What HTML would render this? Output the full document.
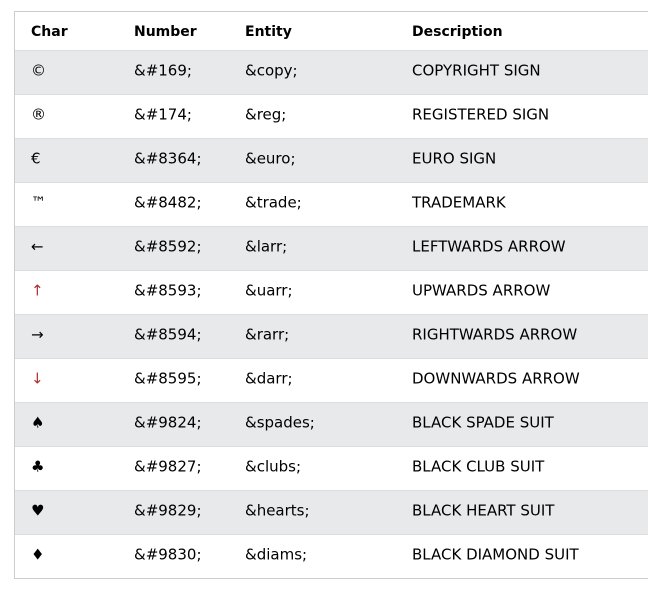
<!DOCTYPE html>
<html><head><style>
body{margin:0;background:#fff;font-family:"DejaVu Sans","Liberation Sans",sans-serif;font-size:15px;color:#000;}
.t{position:absolute;left:14px;top:11px;width:660px;border:1px solid #ccc;border-collapse:collapse;}
.r{position:relative;height:44px;border-top:1px solid #ddd;box-sizing:border-box;}
.h{height:38px;border-top:none;font-weight:bold;font-size:14px;}
.r.s{background:#e7e9eb;}
.r span{position:absolute;top:50%;transform:translateY(-64%);white-space:nowrap;}
.h span{transform:translateY(-45%);}
.a{left:16px;font-size:15px}.b{left:119px}.c{left:230px}.d{left:397px}
.h .a{font-size:14px}
</style></head><body>
<div class="t">
<div class="r h"><span class="a">Char</span><span class="b">Number</span><span class="c">Entity</span><span class="d">Description</span></div>
<div class="r s"><span class="a">©</span><span class="b">&amp;#169;</span><span class="c">&amp;copy;</span><span class="d">COPYRIGHT SIGN</span></div>
<div class="r"><span class="a">®</span><span class="b">&amp;#174;</span><span class="c">&amp;reg;</span><span class="d">REGISTERED SIGN</span></div>
<div class="r s"><span class="a">€</span><span class="b">&amp;#8364;</span><span class="c">&amp;euro;</span><span class="d">EURO SIGN</span></div>
<div class="r"><span class="a">™</span><span class="b">&amp;#8482;</span><span class="c">&amp;trade;</span><span class="d">TRADEMARK</span></div>
<div class="r s"><span class="a">←</span><span class="b">&amp;#8592;</span><span class="c">&amp;larr;</span><span class="d">LEFTWARDS ARROW</span></div>
<div class="r"><span class="a" style="color:#a33">↑</span><span class="b">&amp;#8593;</span><span class="c">&amp;uarr;</span><span class="d">UPWARDS ARROW</span></div>
<div class="r s"><span class="a">→</span><span class="b">&amp;#8594;</span><span class="c">&amp;rarr;</span><span class="d">RIGHTWARDS ARROW</span></div>
<div class="r"><span class="a" style="color:#a33">↓</span><span class="b">&amp;#8595;</span><span class="c">&amp;darr;</span><span class="d">DOWNWARDS ARROW</span></div>
<div class="r s"><span class="a">♠</span><span class="b">&amp;#9824;</span><span class="c">&amp;spades;</span><span class="d">BLACK SPADE SUIT</span></div>
<div class="r"><span class="a">♣</span><span class="b">&amp;#9827;</span><span class="c">&amp;clubs;</span><span class="d">BLACK CLUB SUIT</span></div>
<div class="r s"><span class="a">♥</span><span class="b">&amp;#9829;</span><span class="c">&amp;hearts;</span><span class="d">BLACK HEART SUIT</span></div>
<div class="r"><span class="a">♦</span><span class="b">&amp;#9830;</span><span class="c">&amp;diams;</span><span class="d">BLACK DIAMOND SUIT</span></div>
</div>
</body></html>
